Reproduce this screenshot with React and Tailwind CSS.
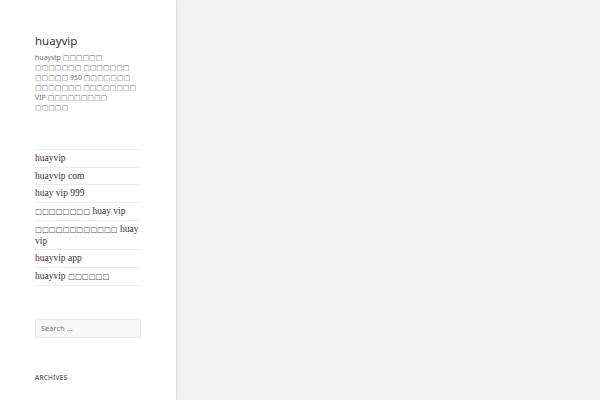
import React from 'react';

// tofu boxes, as the page shows them
const Boxes = ({ n, className = '' }) => (
  <span className={`font-['DejaVu_Sans',sans-serif] ${className}`}>{'□'.repeat(n)}</span>
);

export default function App() {
  return (
    <div className="flex min-h-[400px] w-[600px] bg-[#f1f1f1]">
      {/* Sidebar */}
      <aside className="w-[176px] shrink-0 bg-white px-[35px] pt-[33px] shadow-[1px_0_2px_rgba(0,0,0,0.12)]">
        <h1 className="font-['Noto_Sans',sans-serif] text-[11.5px] leading-[16px] text-[#333]">huayvip</h1>
        <p className="mt-[4px] font-['Noto_Sans',sans-serif] text-[7px] leading-[10px] text-[#707070] whitespace-nowrap">
          huayvip <Boxes n={6} /><br />
          <Boxes n={7} /> <Boxes n={7} /><br />
          <Boxes n={5} /> 950 <Boxes n={7} /><br />
          <Boxes n={7} /> <Boxes n={8} /><br />
          VIP <Boxes n={9} /><br />
          <Boxes n={5} />
        </p>

        {/* Menu */}
        <ul className="mt-[36px] border-t border-[#ececec] font-['Liberation_Serif',serif] text-[9.5px] leading-[10.5px] text-[#333]">
          <li className="border-b border-[#ececec] py-[3px]">huayvip</li>
          <li className="border-b border-[#ececec] py-[3px]">huayvip com</li>
          <li className="border-b border-[#ececec] py-[3px]">huay vip 999</li>
          <li className="border-b border-[#ececec] py-[3px]">
            <Boxes n={8} className="text-[7.3px] text-[#555]" /> huay vip
          </li>
          <li className="border-b border-[#ececec] py-[3px]">
            <Boxes n={12} className="text-[7.3px] text-[#555]" /> huay<br />vip
          </li>
          <li className="border-b border-[#ececec] py-[3px]">huayvip app</li>
          <li className="border-b border-[#ececec] py-[3px]">
            huayvip <Boxes n={6} className="text-[7.3px] text-[#555]" />
          </li>
        </ul>

        {/* Search */}
        <div className="mt-[33px]">
          <div className="h-[19px] w-[106px] border border-[#ececec] bg-[#f7f7f7] pl-[5px] font-['Noto_Sans',sans-serif] text-[7.5px] leading-[17px] text-[#777]">
            Search …
          </div>
        </div>

        <h2 className="mt-[35px] font-['Noto_Sans',sans-serif] text-[6.5px] uppercase leading-[10px] tracking-[0.04em] text-[#333]">
          Archives
        </h2>
      </aside>

      {/* Main */}
      <main className="flex-1" />
    </div>
  );
}
